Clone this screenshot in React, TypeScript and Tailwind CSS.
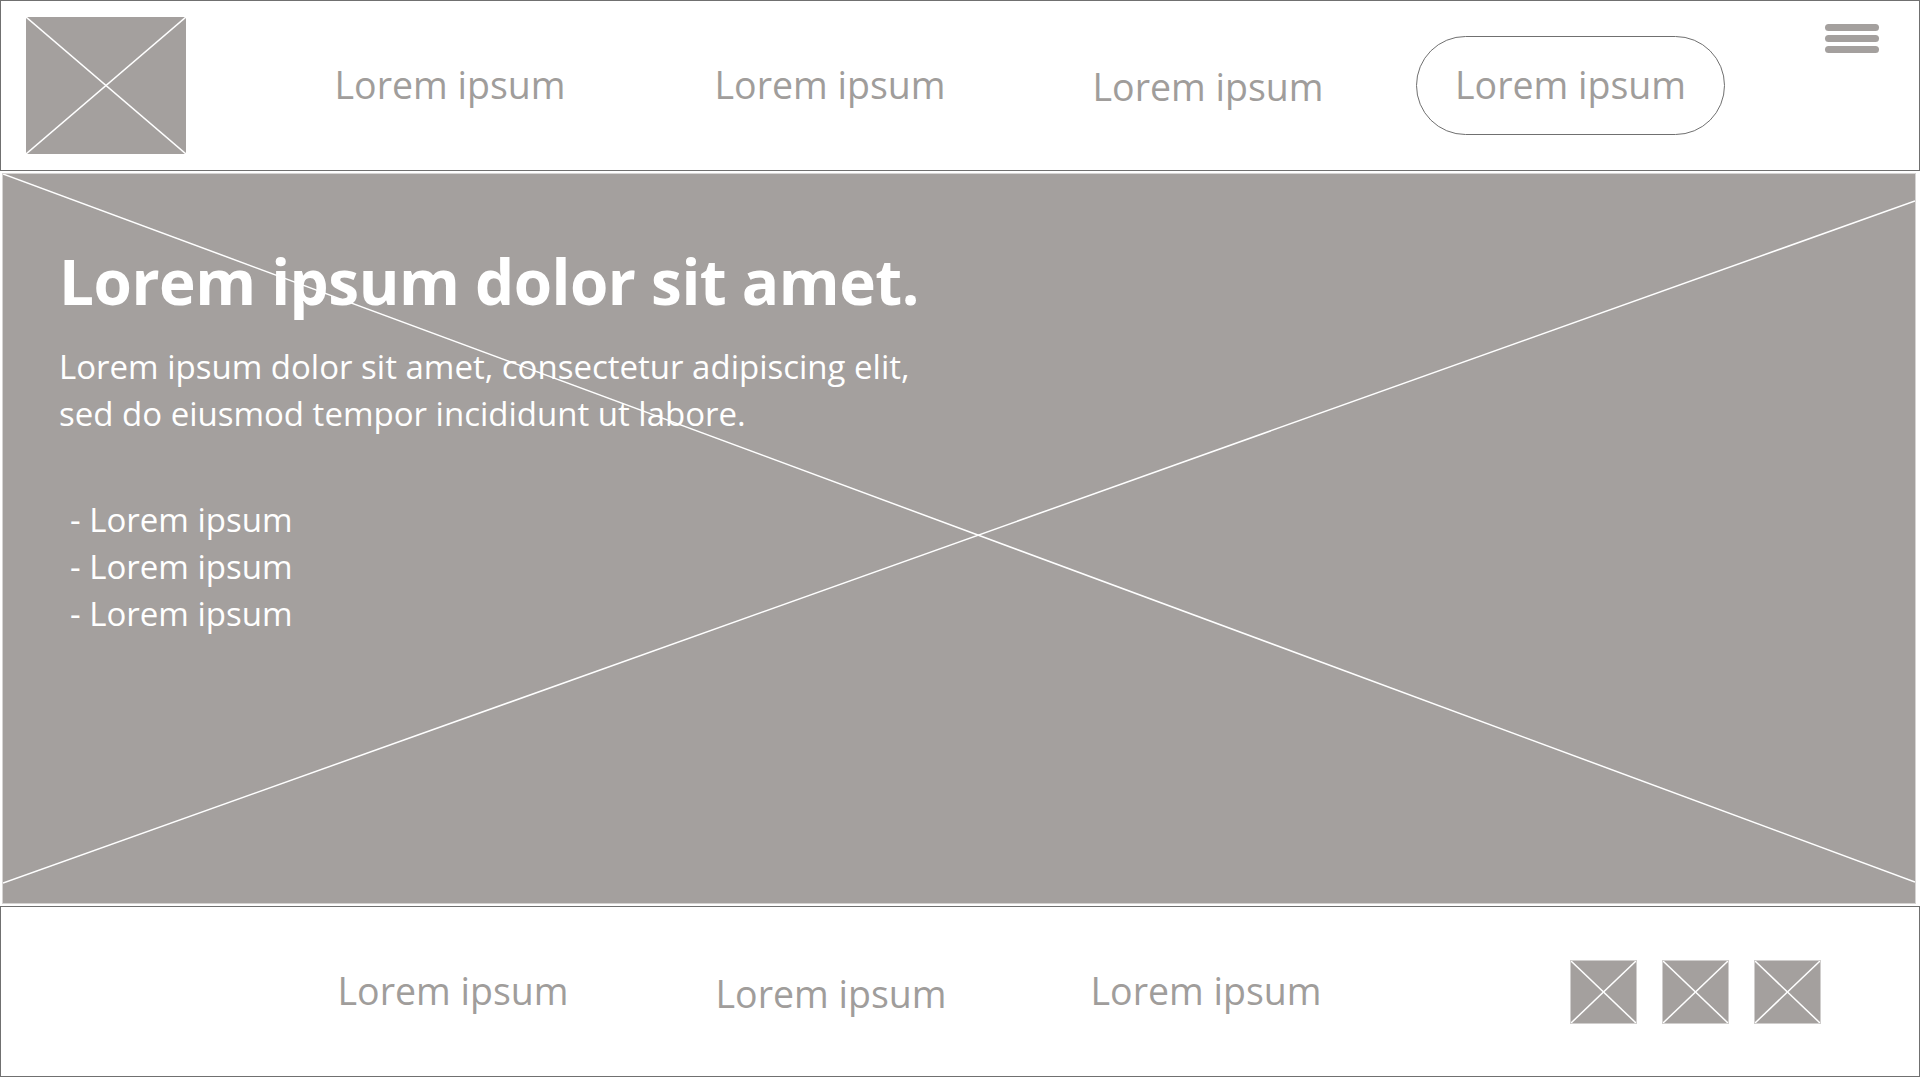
import React from 'react'

const font = { fontFamily: '"Open Sans", "Noto Sans", sans-serif' }

function Placeholder({ className }: { className: string }) {
  return (
    <svg className={className} viewBox="0 0 100 100" preserveAspectRatio="none">
      <rect x="0" y="0" width="100" height="100" fill="#a4a09e" />
      <line x1="0" y1="0" x2="100" y2="100" stroke="#fff" strokeWidth="1.5" vectorEffect="non-scaling-stroke" />
      <line x1="100" y1="0" x2="0" y2="100" stroke="#fff" strokeWidth="1.5" vectorEffect="non-scaling-stroke" />
    </svg>
  )
}

function NavItem({ label, className = '' }: { label: string; className?: string }) {
  return (
    <div className={`w-[300px] text-center text-[37.5px] text-[#a09d9b] ${className}`}>{label}</div>
  )
}

export default function App() {
  return (
    <div className="w-[1920px] h-[1079px] bg-white flex flex-col overflow-hidden" style={font}>
      {/* Header */}
      <header className="h-[171px] border border-[#707070] flex items-center relative">
        <Placeholder className="ml-[25px] w-[160px] h-[137px] block" />
        <NavItem label="Lorem ipsum" className="ml-[114px]" />
        <NavItem label="Lorem ipsum" className="ml-[80px]" />
        <NavItem label="Lorem ipsum" className="ml-[78px] mt-[4px]" />
        <button className="ml-[58px] w-[309px] h-[99px] rounded-full border border-[#707070] text-[37.5px] text-[#a09d9b] flex items-center justify-center">
          Lorem ipsum
        </button>
        <div className="ml-[100px] self-start mt-[23px] flex flex-col gap-[4px]">
          <span className="block w-[54px] h-[7px] rounded-full bg-[#a4a09e]" />
          <span className="block w-[54px] h-[7px] rounded-full bg-[#a4a09e]" />
          <span className="block w-[54px] h-[7px] rounded-full bg-[#a4a09e]" />
        </div>
      </header>

      {/* Hero */}
      <section className="relative mt-[3px] mx-[3px] w-[1912px] h-[729px] bg-[#a4a09e] outline outline-1 outline-[#d6d4d3]">
        <svg className="absolute inset-0 w-full h-full" viewBox="0 0 1912 729" preserveAspectRatio="none">
          <line x1="0" y1="0" x2="1912" y2="708" stroke="#fff" strokeWidth="1.5" />
          <line x1="0" y1="709" x2="1912" y2="27" stroke="#fff" strokeWidth="1.5" />
        </svg>
        <div className="relative pl-[56px] pt-[76px] text-white">
          <h1 className="text-[62px] leading-[62px] font-bold tracking-[-0.5px]">Lorem ipsum dolor sit amet.</h1>
          <p className="mt-[31px] text-[33px] leading-[47px]">
            Lorem ipsum dolor sit amet, consectetur adipiscing elit,
            <br />
            sed do eiusmod tempor incididunt ut labore.
          </p>
          <ul className="mt-[59px] pl-[11px] text-[33px] leading-[47px]">
            <li>- Lorem ipsum</li>
            <li>- Lorem ipsum</li>
            <li>- Lorem ipsum</li>
          </ul>
        </div>
      </section>

      {/* Footer */}
      <footer className="mt-[3px] h-[171px] border border-[#707070] flex items-center">
        <NavItem label="Lorem ipsum" className="ml-[302px]" />
        <NavItem label="Lorem ipsum" className="ml-[78px] mt-[5px]" />
        <NavItem label="Lorem ipsum" className="ml-[75px]" />
        <div className="ml-[215px] flex gap-[27px]">
          <Placeholder className="w-[65px] h-[62px] block outline outline-1 outline-[#d0cecd]" />
          <Placeholder className="w-[65px] h-[62px] block outline outline-1 outline-[#d0cecd]" />
          <Placeholder className="w-[65px] h-[62px] block outline outline-1 outline-[#d0cecd]" />
        </div>
      </footer>
    </div>
  )
}
